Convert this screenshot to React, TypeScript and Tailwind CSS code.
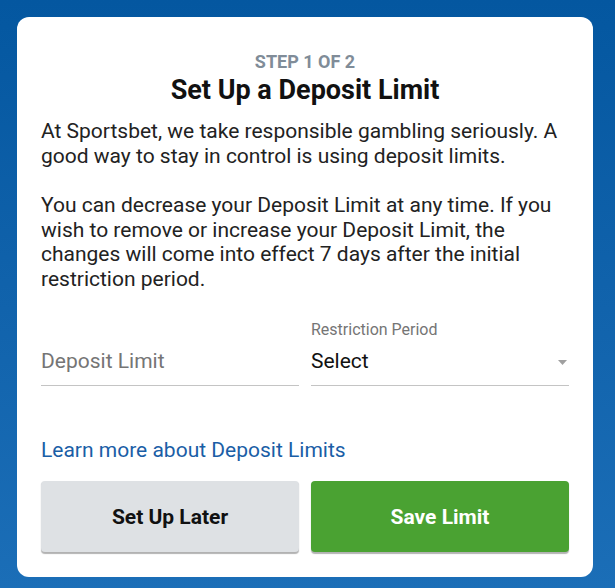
export default function App() {
  return (
    <div
      className="w-[615px] h-[588px] bg-gradient-to-b from-[#0457a0] to-[#1b6eb7] pl-[17px] pt-[17px] overflow-hidden"
      style={{ fontFamily: 'Roboto, "Liberation Sans", sans-serif' }}
    >
      <div className="bg-white rounded-[12px] w-[576px] h-[560px] px-[24px] pt-[34px]">
        <p className="text-center text-[18px] leading-[22px] font-bold text-[#808c98] uppercase">Step 1 of 2</p>
        <h1 className="text-center text-[27px] leading-[32px] font-bold text-[#111] mt-[1px]">Set Up a Deposit Limit</h1>
        <div className="mt-[13px] text-[21px] leading-[24.6px] text-[#222]">
          <p>At Sportsbet, we take responsible gambling seriously. A good way to stay in control is using deposit limits.</p>
          <p className="mt-[25px]">
            You can decrease your Deposit Limit at any time. If you wish to remove or increase your Deposit Limit, the
            changes will come into effect 7 days after the initial restriction period.
          </p>
        </div>
        <div className="grid grid-cols-2 gap-[12px] mt-[28px]">
          <div className="flex flex-col">
            <span className="text-[16px] leading-[20px] select-none">&nbsp;</span>
            <div className="h-[46px] border-b border-[#c4c4c4] flex items-center text-[21px] text-[#757575]">
              Deposit Limit
            </div>
          </div>
          <div className="flex flex-col">
            <span className="text-[16px] leading-[20px] text-[#757575]">Restriction Period</span>
            <div className="h-[46px] border-b border-[#c4c4c4] flex items-center justify-between text-[21px] text-[#111]">
              <span>Select</span>
              <svg width="9" height="5" viewBox="0 0 9 5" className="mr-[2px]">
                <path d="M0 0h9L4.5 5z" fill="#a0a0a0" />
              </svg>
            </div>
          </div>
        </div>
        <a className="block mt-[52px] text-[21px] leading-[24px] text-[#1a5ea6]">Learn more about Deposit Limits</a>
        <div className="grid grid-cols-2 gap-[12px] mt-[19px]">
          <button className="h-[71px] pt-[3px] rounded-[4px] bg-[#dee1e4] shadow-[0_1.5px_1px_rgba(0,0,0,0.3)] text-[21px] font-bold text-[#111]">
            Set Up Later
          </button>
          <button className="h-[71px] pt-[3px] rounded-[4px] bg-[#4aa232] shadow-[0_1.5px_1px_rgba(0,0,0,0.3)] text-[21px] font-bold text-white">
            Save Limit
          </button>
        </div>
      </div>
    </div>
  )
}
